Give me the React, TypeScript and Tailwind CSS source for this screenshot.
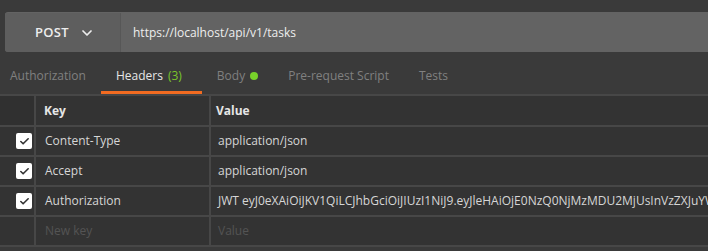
import { Check, ChevronDown } from 'lucide-react';

const rows = [
  { key: 'Content-Type', value: 'application/json' },
  { key: 'Accept', value: 'application/json' },
  {
    key: 'Authorization',
    value:
      'JWT eyJ0eXAiOiJKV1QiLCJhbGciOiJIUzI1NiJ9.eyJleHAiOjE0NzQ0NjMzMDU2MjUsInVzZXJuYW1lIjoiYWRtaW4ifQ',
  },
];

function Tab({ label, active, children }: { label: string; active?: boolean; children?: React.ReactNode }) {
  return (
    <div
      className={`flex h-full items-center gap-[5px] px-[15px] pt-[8px] ${
        active ? 'border-b-[3px] border-[#f26b21] text-[#e6e6e6]' : 'border-b-[3px] border-transparent text-[#808080]'
      }`}
    >
      <span>{label}</span>
      {children}
    </div>
  );
}

export default function App() {
  return (
    <div className="h-[251px] w-[708px] overflow-hidden bg-[#3a3a3a] font-['Open_Sans',sans-serif] text-[12px]">
      <div className="pl-[5px] pt-[12px]">
        <div className="flex h-[40px] overflow-hidden rounded-l-[3px] bg-[#636363] pt-[1px]">
          <div className="flex w-[116px] shrink-0 items-center border-r border-[#575757] bg-[#5e5e5e] pl-[30px] text-[#ededed]">
            <span className="text-[13px] font-semibold tracking-[0.3px]">POST</span>
            <ChevronDown className="ml-[10px] h-[16px] w-[16px]" strokeWidth={2.6} />
          </div>
          <div className="flex items-center pl-[12px] text-[#eeeeee]">https://localhost/api/v1/tasks</div>
        </div>
      </div>

      <div className="ml-[-5px] flex h-[42px] whitespace-nowrap">
        <Tab label="Authorization" />
        <Tab label="Headers" active>
          <span className="mr-[5px] text-[#7bc52a]">(3)</span>
        </Tab>
        <Tab label="Body">
          <span className="h-[8px] w-[8px] rounded-full bg-[#78d12a]" />
        </Tab>
        <Tab label="Pre-request Script" />
        <Tab label="Tests" />
      </div>

      <div className="border-t-2 border-[#474747] bg-[#333333]">
        <div className="grid h-[31px] grid-cols-[36px_175px_1fr] border-b-2 border-[#474747]">
          <div className="border-r-2 border-[#474747] bg-[#303030]" />
          <div className="flex items-center border-r-2 border-[#474747] pl-[8px] text-[12px] font-bold text-[#e6e6e6]">
            Key
          </div>
          <div className="flex items-center pl-[5px] text-[12px] font-bold text-[#e6e6e6]">Value</div>
        </div>
        {rows.map((r) => (
          <div key={r.key} className="grid h-[30px] grid-cols-[36px_175px_1fr] border-b-2 border-[#474747]">
            <div className="flex items-center justify-end border-r-2 border-[#474747] pr-[2px]">
              <div className="flex h-[16px] w-[16px] items-center justify-center rounded-[2px] bg-white">
                <Check className="h-[11px] w-[11px] text-[#333]" strokeWidth={3.5} />
              </div>
            </div>
            <div className="flex items-center border-r-2 border-[#474747] pl-[9px] text-[#d6d6d6]">{r.key}</div>
            <div className="flex items-center overflow-hidden whitespace-nowrap pl-[7px] text-[#d6d6d6]">{r.value}</div>
          </div>
        ))}
        <div className="grid h-[30px] grid-cols-[36px_175px_1fr] border-b-2 border-[#474747]">
          <div className="border-r-2 border-[#474747]" />
          <div className="flex items-center border-r-2 border-[#474747] pl-[9px] text-[#545454]">New key</div>
          <div className="flex items-center pl-[7px] text-[#545454]">Value</div>
        </div>
      </div>
    </div>
  );
}
